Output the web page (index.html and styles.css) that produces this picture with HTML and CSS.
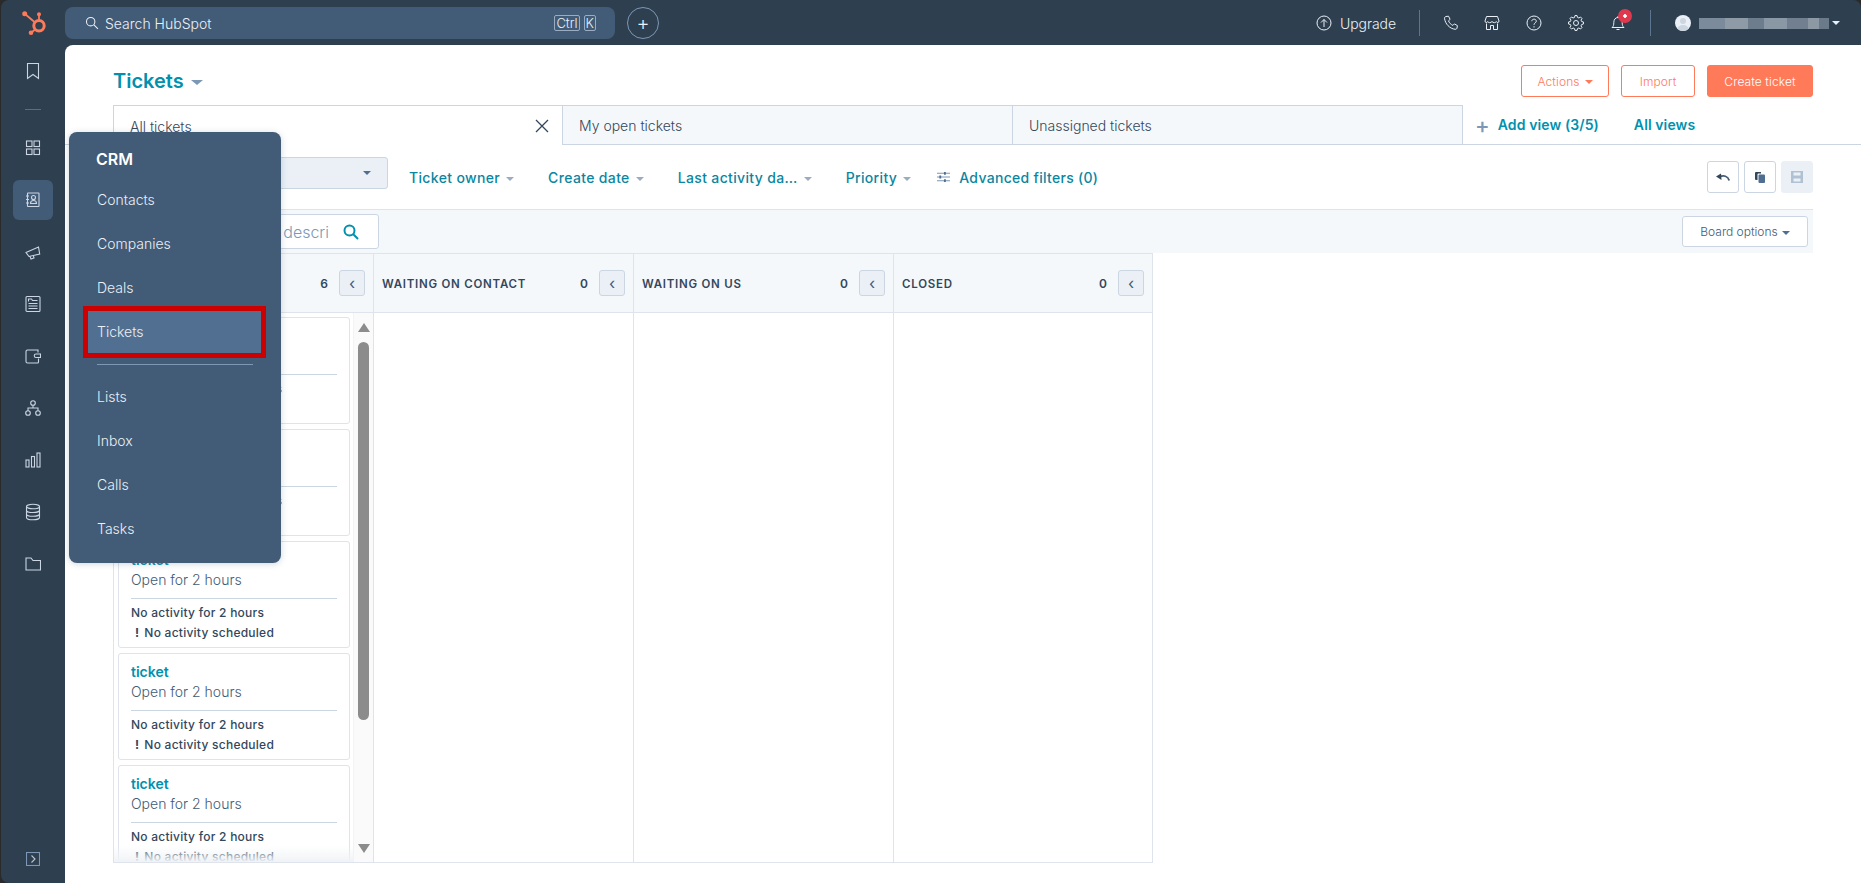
FILE: index.html
```html
<!DOCTYPE html>
<html lang="en">
<head>
<meta charset="utf-8">
<title>Tickets | HubSpot</title>
<link rel="stylesheet" href="styles.css">
</head>
<body>
<div class="app">
  <header class="topbar">
    <div class="logo-slot">
      <svg class="logo" viewBox="0 0 30 30" width="30" height="30"><g fill="none" stroke="#ff7a59"><circle cx="21" cy="17.700" r="5.200" stroke-width="3"/><path stroke-width="1.800" d="M21 12V6.300M16.800 14.200 6.700 5.700M17.200 21.500 13 24.700"/></g><g fill="#ff7a59"><circle cx="6.700" cy="5.700" r="2.500"/><circle cx="13" cy="24.700" r="2.300"/><circle cx="21" cy="6.300" r="2"/></g></svg>
    </div>
    <div class="search">
      <svg class="ico-sm" viewBox="0 0 16 16" width="14" height="14"><circle cx="6.500" cy="6.500" r="4.800"/><path d="m10.200 10.200 4.600 4.600"/></svg>
      <span class="search-label">Search HubSpot</span>
      <span class="kbd">Ctrl</span><span class="kbd">K</span>
    </div>
    <button class="plus">+</button>
    <div class="top-right">
      <svg class="ico" viewBox="0 0 16 16" width="16" height="16"><circle cx="8" cy="8" r="7"/><path d="M8 12V4.500M5 7.500l3-3 3 3"/></svg>
      <span class="upgrade">Upgrade</span>
      <span class="sep first"></span>
      <span class="slot"><svg class="ico" viewBox="0 0 16 16" width="16" height="16"><path d="M3 1.500 5.500 1.200l1.600 3.200-1.600 1.400c.6 1.900 2.400 3.800 4.400 4.600l1.500-1.500 3 1.700-.4 2.600c-.2.8-1 1.200-1.800 1.100C6.700 13.700 2.200 9 1.500 3.200 1.500 2.300 2.200 1.600 3 1.500z"/></svg></span>
      <span class="slot"><svg class="ico" viewBox="0 0 16 16" width="16" height="16"><path d="M2.500 1.500h11L15 6c0 2-2.300 2-2.700.5C12 8 9 8 8 6.500 7 8 4 8 3.700 6.500 3.300 8 1 8 1 6zM2.500 8.500v6h4v-4h3v4h4v-6"/></svg></span>
      <span class="slot"><svg class="ico" viewBox="0 0 16 16" width="16" height="16"><circle cx="8" cy="8" r="7"/><path d="M5.800 6.200C5.800 3.500 10.300 3.500 10.300 6.200 10.300 7.800 8 7.900 8 9.800M8 11.200v1.300"/></svg></span>
      <span class="slot"><svg class="ico" viewBox="0 0 16 16" width="16" height="16"><circle cx="8" cy="8" r="2.500"/><path d="M13.600 6.500 15.430 6.960V9.040L13.600 9.500 13.020 10.900 13.990 12.510 12.510 13.990 10.900 13.020 9.500 13.600 9.040 15.430H6.960L6.500 13.600 5.100 13.020 3.490 13.990 2.010 12.510 2.980 10.900 2.400 9.500 .57 9.040V6.960L2.400 6.500 2.980 5.100 2.010 3.490 3.490 2.010 5.100 2.980 6.500 2.400 6.960 .57H9.040L9.500 2.400 10.900 2.980 12.510 2.010 13.990 3.490 13.020 5.100z"/></svg></span>
      <span class="slot bell"><svg class="ico" viewBox="0 0 16 16" width="16" height="16"><path d="M2 12.500c1.500-1.200 1.800-2.500 1.800-5C3.800 4.500 5.500 2.500 8 2.500s4.200 2 4.200 5c0 2.500.3 3.800 1.800 5zM8 1v1.500M6.500 14.500h3"/></svg><i class="badge"></i></span>
      <span class="sep"></span>
      <span class="avatar"><i class="avatar-head"></i><i class="avatar-body"></i></span>
      <span class="blurname"></span>
      <span class="caret white"></span>
    </div>
  </header>

  <div class="body-row">
    <nav class="sidebar">
      <span class="nav-item"><svg class="ico-nav" viewBox="0 0 16 18"><path d="M2.500 1.500h11v15L8 12.500 2.500 16.500z"/></svg></span>
      <span class="nav-rule"></span>
      <span class="nav-item"><svg class="ico-nav" viewBox="0 0 16 18"><rect x="1.500" y="2" width="5.500" height="5.500"/><rect x="9" y="2" width="5.500" height="5.500"/><rect x="1.500" y="10" width="5.500" height="5.500"/><rect x="9" y="10" width="5.500" height="5.500"/></svg></span>
      <span class="nav-item active"><span class="nav-box"><svg class="ico-nav" viewBox="0 0 16 18"><rect x="2.500" y="2" width="11.500" height="13.500" rx=".5"/><circle cx="8.500" cy="6.500" r="2"/><path d="M5.500 12.500c0-4 6-4 6 0zM1 5h3M1 8.500h3M1 12h3"/></svg></span></span>
      <span class="nav-item"><svg class="ico-nav" viewBox="0 0 16 18"><path d="M1 9.500 13.500 4l1.200 7L4 13.500zM5 13.500l1 2.500 3-1-.6-2"/></svg></span>
      <span class="nav-item"><svg class="ico-nav" viewBox="0 0 16 18"><rect x="1" y="1.500" width="14" height="15" rx="1"/><path d="M3.500 8.500h9M3.500 11h9M3.500 13.500h9M3.500 6.500V4h3l1 1.500h5"/></svg></span>
      <span class="nav-item"><svg class="ico-nav" viewBox="0 0 16 18"><path d="M13 5.500V3H2.500C1.500 3 1 3.700 1 4.500v10c0 .8.500 1.500 1.500 1.500h10c.5 0 1-.5 1-1v-3.500M13 7h2.500v3.500H11a1.750 1.750 0 0 1 0-3.500z"/></svg></span>
      <span class="nav-item"><svg class="ico-nav" viewBox="0 0 16 18"><circle cx="8" cy="4" r="2.300"/><circle cx="3" cy="14" r="2.300"/><circle cx="13" cy="14" r="2.300"/><path d="M8 6.300V9M3 11.700V9h10v2.700"/></svg></span>
      <span class="nav-item"><svg class="ico-nav" viewBox="0 0 16 18"><rect x="1" y="9" width="3" height="7"/><rect x="6.500" y="5.500" width="3" height="10.500"/><rect x="12" y="2" width="3" height="14"/></svg></span>
      <span class="nav-item"><svg class="ico-nav" viewBox="0 0 16 18"><ellipse cx="8" cy="3.500" rx="6.500" ry="2.300"/><path d="M1.500 3.500v11c0 1.300 3 2.300 6.500 2.300s6.500-1 6.500-2.300v-11M1.500 7.200c0 1.300 3 2.300 6.500 2.300s6.500-1 6.500-2.300M1.500 10.900c0 1.300 3 2.300 6.500 2.300s6.500-1 6.500-2.300"/></svg></span>
      <span class="nav-item"><svg class="ico-nav" viewBox="0 0 16 18"><path d="M1 3h5l2 2.500h7.500V15H1z"/></svg></span>
      <span class="nav-expand"><svg class="ico-nav" viewBox="0 0 14 14"><rect x=".5" y=".5" width="13" height="13"/><path d="m5.500 3.500 3.500 3.500-3.500 3.500"/></svg></span>
    </nav>

    <main class="content">
      <section class="page-head">
        <h1 class="title">Tickets<span class="caret big"></span></h1>
        <div class="actions">
          <button class="btn outline">Actions<span class="caret orange"></span></button>
          <button class="btn outline">Import</button>
          <button class="btn solid">Create ticket</button>
        </div>
      </section>

      <section class="tabs">
        <div class="tab selected"><span>All tickets</span>
          <svg class="tab-x" viewBox="0 0 14 14" width="14" height="14"><path d="m1 1 12 12M13 1 1 13"/></svg>
        </div>
        <div class="tab">My open tickets</div>
        <div class="tab">Unassigned tickets</div>
        <a class="tab-link add"><span class="add-plus">+</span>Add view (3/5)</a>
        <a class="tab-link">All views</a>
      </section>

      <section class="filters">
        <div class="pipeline"><span class="caret dark"></span></div>
        <div class="filter-list">
          <a class="filter">Ticket owner<span class="caret grey"></span></a>
          <a class="filter">Create date<span class="caret grey"></span></a>
          <a class="filter">Last activity da…<span class="caret grey"></span></a>
          <a class="filter">Priority<span class="caret grey"></span></a>
        </div>
        <a class="advanced"><svg class="sliders" viewBox="0 0 14 12" width="13" height="12"><path d="M0 2h14M0 6h14M0 10h14"/><path class="knob" d="M8.500 .5v3M3.500 4.500v3M8.500 8.500v3"/></svg>Advanced filters (0)</a>
        <div class="view-tools">
          <button class="tool"><svg viewBox="0 0 14 8" width="14" height="8"><path class="undo-line" d="M13.200 7.500C12 3 7.500 1.800 3.500 4"/><path class="solid-ico" d="M0 3.500 5 .5 5.500 7z"/></svg></button>
          <button class="tool"><svg viewBox="0 0 10 11" width="10" height="11"><path class="solid-ico" d="M1 0h5v1.500H3.500a1 1 0 0 0-1 1V8H1a1 1 0 0 1-1-1V1a1 1 0 0 1 1-1z"/><rect class="copy-front" x="3.500" y="2.500" width="6.500" height="8.500" rx="1"/></svg></button>
          <button class="tool off"><svg viewBox="0 0 12 12" width="12" height="12"><path class="off-ico" d="M0 0h12v12H0zM2.500 1.500v3h7v-3zM2.500 7.500v3h7v-3z"/></svg></button>
        </div>
      </section>

      <section class="toolbar">
        <div class="board-search"><span class="placeholder">Search name or descri</span>
          <svg class="mag" viewBox="0 0 16 16" width="16" height="16"><circle cx="6.500" cy="6.500" r="5"/><path d="m10.300 10.300 4.700 4.700"/></svg>
        </div>
        <button class="board-options">Board options<span class="caret dark"></span></button>
      </section>

      <section class="board">
        <div class="col">
          <div class="col-head"><span class="col-title">New</span><span class="count">6</span><button class="collapse">‹</button></div>
          <div class="col-body">
            <div class="cards">
              <article class="card"><a class="t-name">ticket</a><p class="t-open">Open for 2 hours</p><hr class="t-rule"><p class="t-act wide">No activity for 2 minutes</p><p class="t-act warn"><b>!</b>No activity scheduled</p></article>
              <article class="card"><a class="t-name">ticket</a><p class="t-open">Open for 2 hours</p><hr class="t-rule"><p class="t-act wide">No activity for 2 minutes</p><p class="t-act warn"><b>!</b>No activity scheduled</p></article>
              <article class="card"><a class="t-name">ticket</a><p class="t-open">Open for 2 hours</p><hr class="t-rule"><p class="t-act">No activity for 2 hours</p><p class="t-act warn"><b>!</b>No activity scheduled</p></article>
              <article class="card"><a class="t-name">ticket</a><p class="t-open">Open for 2 hours</p><hr class="t-rule"><p class="t-act">No activity for 2 hours</p><p class="t-act warn"><b>!</b>No activity scheduled</p></article>
              <article class="card"><a class="t-name">ticket</a><p class="t-open">Open for 2 hours</p><hr class="t-rule"><p class="t-act">No activity for 2 hours</p><p class="t-act warn"><b>!</b>No activity scheduled</p></article>
              <div class="fade"></div>
            </div>
            <div class="scrollbar"><i class="arrow up"></i><i class="thumb"></i><i class="arrow down"></i></div>
          </div>
        </div>
        <div class="col"><div class="col-head"><span class="col-title">Waiting on contact</span><span class="count">0</span><button class="collapse">‹</button></div></div>
        <div class="col"><div class="col-head"><span class="col-title">Waiting on us</span><span class="count">0</span><button class="collapse">‹</button></div></div>
        <div class="col"><div class="col-head"><span class="col-title">Closed</span><span class="count">0</span><button class="collapse">‹</button></div></div>
      </section>
    </main>
  </div>

  <aside class="flyout">
    <h2 class="fly-title">CRM</h2>
    <a class="fly-item">Contacts</a>
    <a class="fly-item">Companies</a>
    <a class="fly-item">Deals</a>
    <a class="fly-item current">Tickets</a>
    <hr class="fly-rule">
    <a class="fly-item">Lists</a>
    <a class="fly-item">Inbox</a>
    <a class="fly-item">Calls</a>
    <a class="fly-item">Tasks</a>
  </aside>
</div>
</body>
</html>
```
FILE: styles.css
```css
* { box-sizing: border-box; }
html, body { margin: 0; height: 100%; overflow: hidden; }
body {
  background: #2a2a2a;
  font-family: Inter, "Noto Sans", "Liberation Sans", sans-serif;
  color: #33475b;
  font-size: 14px;
}
button { font-family: inherit; cursor: pointer; }
p, h1, h2 { margin: 0; }
a { color: inherit; }

.app {
  position: relative;
  height: 883px;
  margin-left: 1px;
  padding-top: 2px;
  background: #2e3f50;
  border-radius: 8px 8px 0 8px;
  display: flex;
  flex-direction: column;
}

/* top bar */
.topbar {
  height: 42px;
  margin-bottom: 1px;
  flex: none;
  display: flex;
  align-items: center;
  color: #eaf0f6;
}
.logo-slot { width: 64px; display: flex; justify-content: center; }
.logo { display: block; }
.search {
  width: 550px;
  height: 32px;
  background: #425b76;
  border-radius: 8px;
  display: flex;
  align-items: center;
  padding: 0 19px 0 20px;
  font-size: 14px;
  font-weight: 300;
}
.ico-sm { fill: none; stroke: #eaf0f6; stroke-width: 1.200; margin-right: 6px; }
.search-label { flex: 1; }
.kbd {
  border: 1px solid #99acc2;
  border-radius: 2px;
  font-size: 13px;
  line-height: 14px;
  padding: 0 1px;
  margin-left: 4px;
}
.plus {
  width: 32px;
  height: 32px;
  margin-left: 12px;
  border-radius: 50%;
  background: transparent;
  border: 1px solid #7c98b6;
  color: #eaf0f6;
  font-size: 20px;
  font-weight: 300;
  line-height: 26px;
  padding: 0;
}
.top-right { margin-left: auto; display: flex; align-items: center; padding-right: 21px; }
.ico { fill: none; stroke: #eaf0f6; stroke-width: 1; display: block; }
.upgrade { margin-left: 8px; font-size: 14px; font-weight: 300; letter-spacing: -.05px; }
.sep { width: 1px; height: 26px; background: #5c7590; margin-left: 11px; }
.sep.first { margin-left: 23px; }
.slot { width: 42px; display: flex; justify-content: center; position: relative; }
.sep + .slot { width: 40px; margin-left: 11px; }
.badge {
  position: absolute;
  width: 14px;
  height: 14px;
  top: -6px;
  left: 21px;
  border-radius: 50%;
  background: #e0394e radial-gradient(circle, #fff 0 1.500px, transparent 2px);
}
.avatar {
  width: 16px;
  height: 16px;
  border-radius: 50%;
  background: #eaf0f6;
  margin-left: 24px;
  position: relative;
  overflow: hidden;
}
.avatar-head { position: absolute; width: 6px; height: 6px; left: 5px; top: 3px; border-radius: 50%; background: #cbd6e2; }
.avatar-body { position: absolute; width: 12px; height: 10px; left: 2px; top: 10px; border-radius: 50%; background: #cbd6e2; }
.blurname {
  width: 130px;
  height: 11px;
  margin-left: 8px;
  margin-right: 3px;
  background: linear-gradient(90deg, #7c8b9b 0 20%, #8e9aa6 20% 38%, #6d7d8e 38% 50%, #8a97a5 50% 68%, #727f90 68% 84%, #8c98a3 84% 92%, #6a7a8b 92%);
}

/* carets */
.caret { display: inline-block; width: 0; height: 0; border-style: solid; border-width: 4px 4px 0; border-color: #99acc2 transparent transparent; margin-left: 7px; vertical-align: middle; }
.caret.white { border-color: #eaf0f6 transparent transparent; margin-left: 0; border-width: 4.500px 4.500px 0; }
.caret.big { border-width: 5px 6px 0; border-color: #7c98b6 transparent transparent; margin-left: 7px; }
.caret.orange { border-color: #ff7a59 transparent transparent; margin-left: 5px; }
.caret.grey { border-color: #99acc2 transparent transparent; border-width: 4px 4px 0; margin-left: 6px; }
.caret.dark { border-color: #506e91 transparent transparent; margin-left: 4px; }

/* body */
.body-row { flex: 1; display: flex; min-height: 0; }
.sidebar { width: 64px; flex: none; display: flex; flex-direction: column; align-items: center; padding-bottom: 17px; }
.nav-item { height: 52px; width: 100%; display: flex; align-items: center; justify-content: center; flex: none; }
.nav-rule { height: 1px; width: 16px; background: #516f90; margin: 12px 0; flex: none; }
.nav-box { width: 40px; height: 40px; border-radius: 6px; background: #425b76; display: flex; align-items: center; justify-content: center; }
.ico-nav { width: 16px; height: 18px; fill: none; stroke: #cbd6e2; stroke-width: 1.100; display: block; }
.nav-expand { margin-top: auto; height: 14px; width: 14px; }
.nav-expand .ico-nav { width: 14px; height: 14px; stroke: #b9c7d6; }
.nav-expand rect { stroke: #7c98b6; }

.content { flex: 1; background: #fff; border-top-left-radius: 8px; min-width: 0; display: flex; flex-direction: column; }

.page-head { height: 60px; padding: 20px 48px 8px; display: flex; align-items: center; flex: none; }
.title { font-size: 20px; font-weight: 600; color: #0091ae; line-height: 32px; }
.actions { margin-left: auto; display: flex; gap: 12px; }
.btn { height: 32px; border-radius: 3px; font-size: 12px; font-weight: 300; padding: 0; letter-spacing: .1px; }
.btn.outline { background: #fff; border: 1px solid #ff7a59; color: #ff7a59; }
.btn.outline:nth-child(1) { width: 88px; }
.btn.outline:nth-child(2) { width: 74px; }
.btn.solid { width: 106px; background: #ff7a59; border: 1px solid #ff7a59; color: #fff; }

.tabs { height: 40px; flex: none; display: flex; padding-left: 48px; border-bottom: 1px solid #cbd6e2; }
.tab {
  width: 450px;
  height: 40px;
  background: #f5f8fa;
  border: 1px solid #cbd6e2;
  border-left: 0;
  padding: 1px 15px 0 16px;
  display: flex;
  align-items: center;
  font-size: 14px;
  font-weight: 300;
}
.tab.selected {
  background: #fff;
  border-left: 1px solid #cbd6e2;
  border-bottom: 0;
  justify-content: space-between;
  padding-right: 13px;
}
.tab-x { stroke: #33475b; stroke-width: 1.300; fill: none; }
.tab-link { font-size: 14px; font-weight: 600; color: #0091ae; align-self: center; margin-left: 35px; letter-spacing: .1px; }
.tab-link.add { margin-left: 12px; display: flex; align-items: center; }
.add-plus { color: #7c98b6; font-size: 22px; font-weight: 500; margin-right: 8px; line-height: 20px; }

.filters { height: 64px; flex: none; display: flex; align-items: center; padding: 0 48px; }
.pipeline { width: 275px; height: 32px; margin-bottom: 8px; background: #eaf0f6; border: 1px solid #cbd6e2; border-radius: 3px; display: flex; align-items: center; justify-content: flex-end; padding-right: 16px; }
.filter-list { display: flex; gap: 34px; margin-left: 21px; }
.filter { font-size: 14px; font-weight: 500; color: #0b86a1; letter-spacing: .35px; }
.advanced { margin-left: 26px; font-size: 14px; font-weight: 500; color: #0b86a1; letter-spacing: .3px; display: flex; align-items: center; }
.sliders { stroke: #7c98b6; stroke-width: 1.100; fill: none; margin-right: 9px; }
.knob { stroke: #506e91; stroke-width: 2; }
.view-tools { margin-left: auto; display: flex; gap: 5px; }
.tool { width: 32px; height: 32px; background: #fff; border: 1px solid #cbd6e2; border-radius: 3px; padding: 0; display: flex; align-items: center; justify-content: center; }
.tool.off { background: #eaf0f6; border-color: #eaf0f6; }
.solid-ico { fill: #33475b; }
.undo-line { fill: none; stroke: #425b76; stroke-width: 1.800; }
.copy-front { fill: #506e91; }
.off-ico { fill: #b0c1d4; fill-rule: evenodd; }

.toolbar { height: 44px; flex: none; margin: 0 48px; background: #f5f8fa; border-top: 1px solid #dfe3eb; display: flex; align-items: center; justify-content: space-between; padding: 0 5px; }
.board-search { width: 261px; height: 35px; background: #fff; border: 1px solid #cbd6e2; border-radius: 3px; display: flex; align-items: center; justify-content: flex-end; gap: 14px; padding: 0 19px 0 10px; overflow: hidden; }
.placeholder { font-size: 16px; font-weight: 300; color: #7c98b6; white-space: nowrap; }
.mag { fill: none; stroke: #0091ae; stroke-width: 2; flex: none; }
.board-options { height: 31px; width: 126px; background: #fff; border: 1px solid #cbd6e2; border-radius: 3px; font-size: 12px; font-weight: 300; color: #425b76; padding: 0; }

.board { width: 1040px; height: 610px; margin-left: 48px; display: flex; flex: none; border-bottom: 1px solid #dfe3eb; }
.col { width: 260px; flex: none; border-right: 1px solid #dfe3eb; display: flex; flex-direction: column; }
.col:first-child { width: 261px; border-left: 1px solid #dfe3eb; }
.col:last-child { width: 259px; }
.col-head { height: 60px; flex: none; background: #f5f8fa; border-top: 1px solid #dfe3eb; border-bottom: 1px solid #dfe3eb; display: flex; align-items: center; padding: 1px 8px 0; }
.col-title { flex: 1; font-size: 11.500px; font-weight: 600; text-transform: uppercase; letter-spacing: .75px; color: #33475b; white-space: nowrap; }
.count { font-size: 12px; font-weight: 600; margin-right: 11px; }
.collapse { width: 26px; height: 26px; margin-top: -1px; background: #eaf0f6; border: 1px solid #cbd6e2; border-radius: 3px; color: #425b76; font-size: 16px; line-height: 20px; padding: 0; }
.col-body { flex: 1; display: flex; min-height: 0; }
.cards { position: relative; width: 239px; flex: none; padding: 4px 0 0 4px; overflow: hidden; display: flex; flex-direction: column; gap: 5px; }
.card { width: 232px; height: 107px; flex: none; background: #fff; border: 1px solid #dfe3eb; border-radius: 3px; padding: 8px 12px 0; }
.t-name { display: block; font-size: 14px; font-weight: 600; color: #0091ae; line-height: 20px; }
.t-open { font-size: 14px; font-weight: 300; line-height: 20px; color: #425b76; }
.t-rule { border: 0; height: 1px; background: #cbd6e2; margin: 8px 0 4px; }
.t-act { font-size: 12px; font-weight: 500; line-height: 20px; color: #33475b; white-space: nowrap; letter-spacing: .25px; }
.t-act.wide { letter-spacing: .45px; }
.warn b { font-weight: 700; margin: 0 5px 0 4px; }
.fade { position: absolute; left: 0; right: 0; bottom: 0; height: 16px; background: linear-gradient(rgba(245,248,250,0), #f0f3f7); }
.scrollbar { flex: 1; background: #fafafa; display: flex; flex-direction: column; align-items: center; padding: 10px 0 9px; border-left: 1px solid #f3f3f3; }
.arrow { width: 0; height: 0; border-style: solid; border-color: transparent; flex: none; }
.arrow.up { border-width: 0 6.500px 9px; border-bottom-color: #8c8c8c; }
.arrow.down { border-width: 9px 6.500px 0; border-top-color: #8c8c8c; margin-top: auto; }
.thumb { width: 11px; height: 378px; margin-top: 10px; background: #8c8c8c; border-radius: 6px; flex: none; }

/* flyout */
.flyout {
  position: absolute;
  left: 68px;
  top: 132px;
  width: 212px;
  height: 431px;
  background: #425b76;
  border-radius: 8px;
  box-shadow: 0 1px 6px rgba(66,91,118,.25);
  padding: 0 19px 0 18px;
  color: #eaf0f6;
}
.fly-title { height: 46px; display: flex; align-items: center; padding: 8px 10px 0 9px; font-size: 16px; font-weight: 600; color: #fff; }
.fly-item { height: 44px; display: flex; align-items: center; padding: 0 0 2px 10px; font-size: 14px; font-weight: 300; }
.fly-item.current { background: #516f90; outline: 5px solid #cc0000; outline-offset: -1px; }
.fly-rule { border: 0; height: 1px; background: #7c98b6; margin: 10px 9px 10px 10px; }
```
